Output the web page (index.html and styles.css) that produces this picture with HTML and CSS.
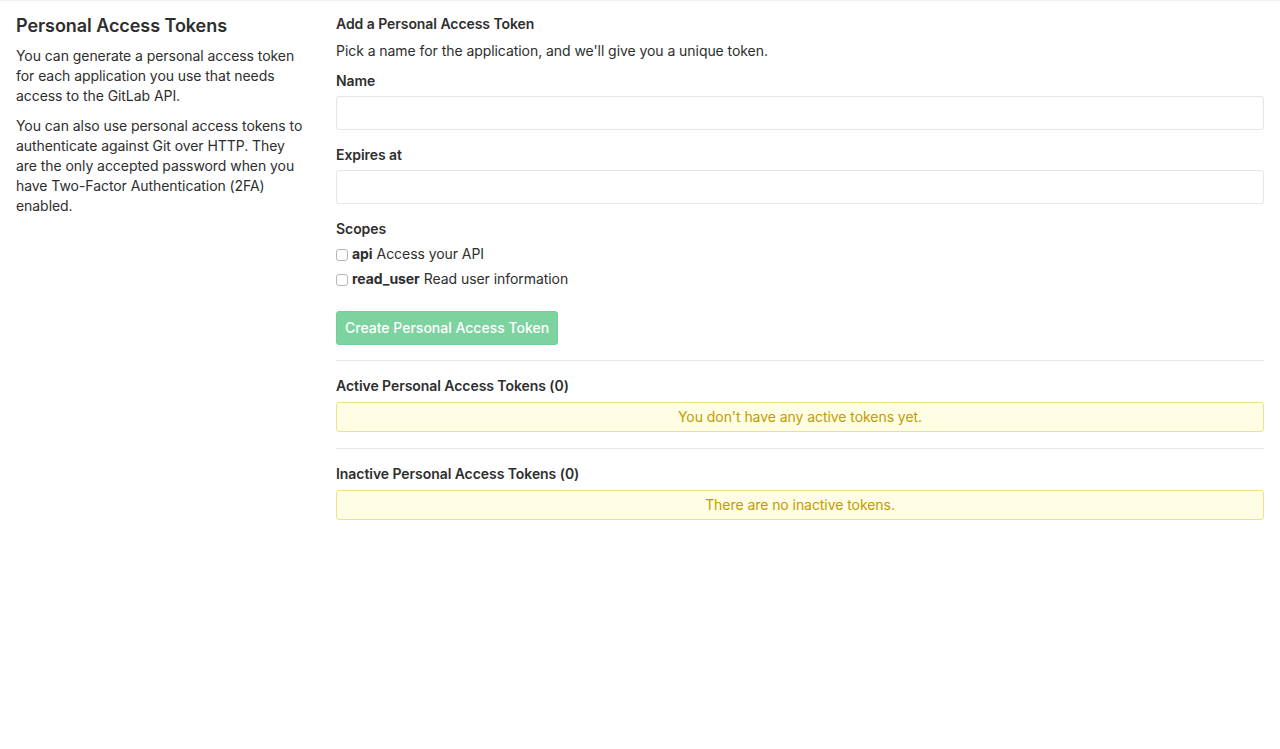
FILE: index.html
```html
<!DOCTYPE html>
<html lang="en">
<head>
<meta charset="utf-8">
<title>Personal Access Tokens</title>
<link rel="stylesheet" href="styles.css">
</head>
<body>
<div class="page">
  <div class="row">
    <aside class="col-side">
      <h4 class="side-title">Personal Access Tokens</h4>
      <p>You can generate a personal access token for each application you use that needs access to the GitLab API.</p>
      <p>You can also use personal access tokens to authenticate against Git over HTTP. They are the only accepted password when you have Two-Factor Authentication (2FA) enabled.</p>
    </aside>
    <main class="col-main">
      <h5 class="section-title first">Add a Personal Access Token</h5>
      <p class="intro">Pick a name for the application, and we'll give you a unique token.</p>
      <form class="token-form">
        <div class="form-group">
          <label class="label">Name</label>
          <input class="form-control" type="text">
        </div>
        <div class="form-group">
          <label class="label">Expires at</label>
          <input class="form-control" type="text">
        </div>
        <div class="form-group scopes">
          <label class="label">Scopes</label>
          <label class="check"><span class="box"></span><b>api</b> Access your API</label>
          <label class="check"><span class="box"></span><b>read_user</b> Read user information</label>
        </div>
        <button class="btn-create" type="button">Create Personal Access Token</button>
      </form>
      <hr class="divider">
      <h5 class="section-title">Active Personal Access Tokens (0)</h5>
      <div class="alert">You don't have any active tokens yet.</div>
      <hr class="divider">
      <h5 class="section-title">Inactive Personal Access Tokens (0)</h5>
      <div class="alert">There are no inactive tokens.</div>
    </main>
  </div>
</div>
</body>
</html>
```
FILE: styles.css
```css
* { box-sizing: border-box; }
html, body { margin: 0; padding: 0; }
body {
  font-family: Inter, "Liberation Sans", Arial, sans-serif;
  font-size: 14px;
  line-height: 20px;
  letter-spacing: -0.06px;
  color: #2e2e2e;
  background: #fff;
  border-top: 1px solid #f0f0f0;
}
.page { padding: 0 16px; }
.row { display: flex; margin: 0 -16px; }
.col-side { width: 320px; padding: 0 16px; }
.col-main { flex: 1; padding: 0 16px; }

.side-title {
  font-size: 18px;
  font-weight: 600;
  line-height: 26px;
  margin: 12px 0 7px;
}
.col-side p { margin: 0 0 10px; }

.section-title {
  font-size: 14px;
  font-weight: 600;
  line-height: 20px;
  margin: 15px 0 6px;
}
.section-title.first { margin: 13px 0 7px; }
.intro { margin: 0 0 10px; }

.form-group { margin-bottom: 15px; }
.label {
  display: block;
  font-weight: 600;
  margin-bottom: 5px;
}
.form-control {
  display: block;
  width: 100%;
  height: 34px;
  border: 1px solid #e5e5e5;
  border-radius: 3px;
  background: #fff;
  padding: 6px 10px;
  font: inherit;
  margin: 0;
}
.scopes { margin-bottom: 22px; }
.check {
  display: flex;
  align-items: center;
  line-height: 20px;
  margin-bottom: 5px;
}
.check b { font-weight: 700; margin-right: 4px; }
.box {
  width: 12px;
  height: 12px;
  border: 1px solid #b5b5b5;
  border-radius: 3px;
  background: #fff;
  margin: 1px 4px 0 0;
  flex: none;
}
.btn-create {
  display: block;
  height: 34px;
  padding: 0 8px;
  background: #7dd3a0;
  border: 1px solid #74cf98;
  border-radius: 3px;
  color: #fff;
  font: inherit;
  font-size: 14px;
  font-weight: 500;
  cursor: default;
}
.divider {
  border: 0;
  border-top: 1px solid #e5e5e5;
  margin: 15px 0 0;
}
.alert {
  height: 30px;
  line-height: 28px;
  border: 1px solid #f0e08e;
  border-radius: 3px;
  background: #fffde3;
  color: #bf9c00;
  text-align: center;
  margin-bottom: 16px;
}
```
